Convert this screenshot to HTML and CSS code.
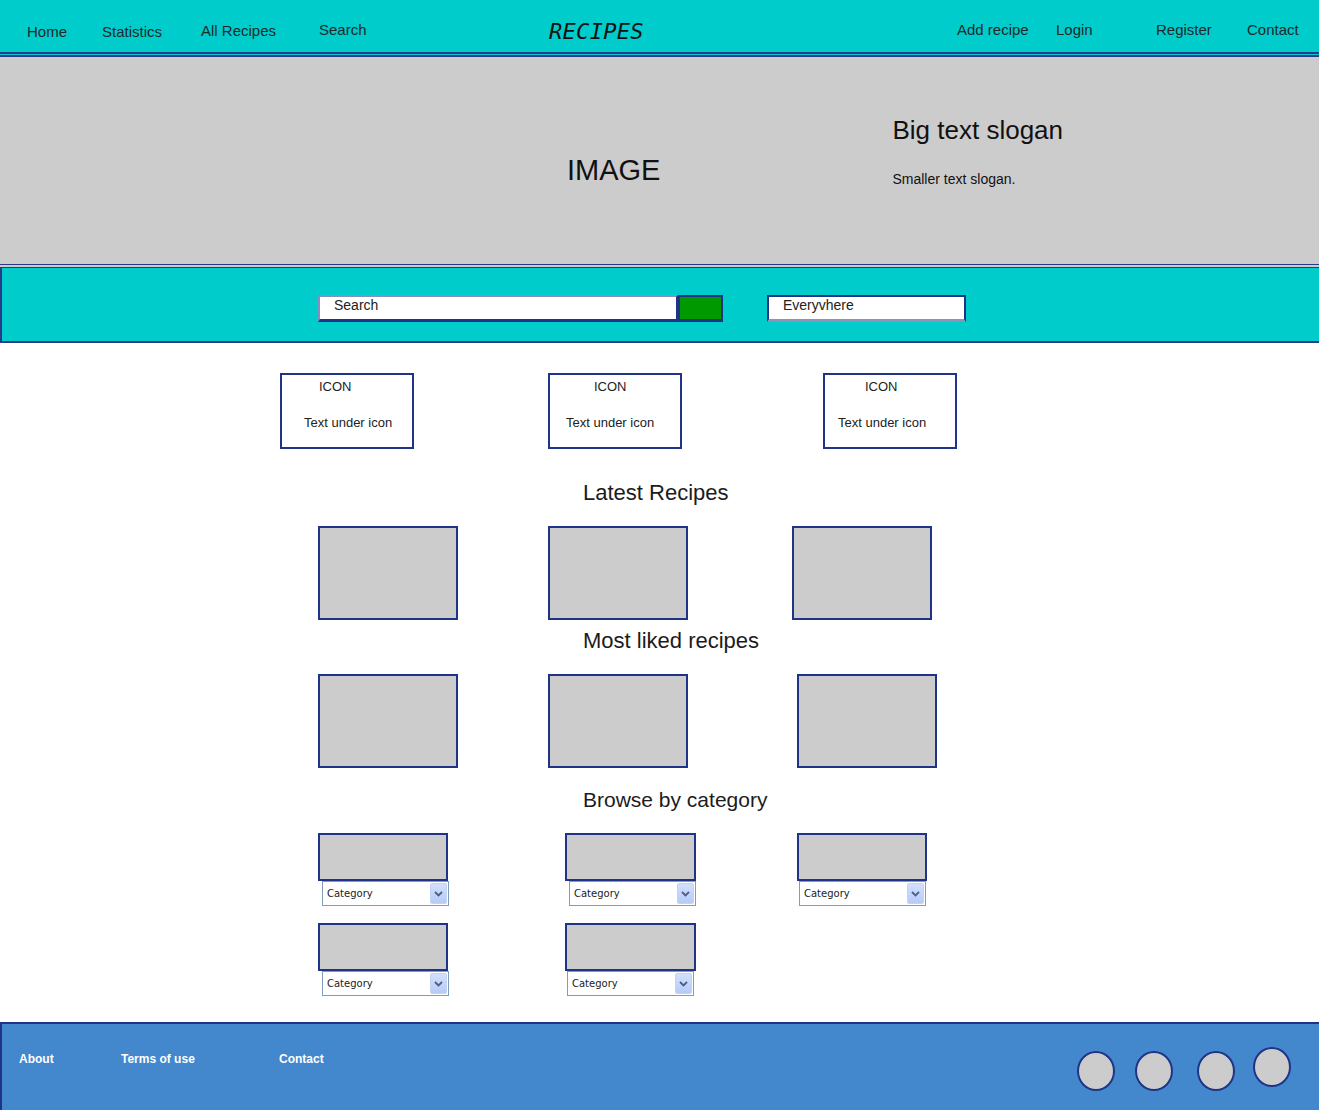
FILE: index.html
```html
<!DOCTYPE html>
<html lang="en">
<head>
<meta charset="utf-8">
<title>Recipes</title>
<link rel="stylesheet" href="styles.css">
</head>
<body>
<header class="topbar">
  <a class="nav-link nav-low">Home</a>
  <a class="nav-link nav-low">Statistics</a>
  <a class="nav-link nav-mid">All Recipes</a>
  <a class="nav-link">Search</a>
  <div class="logo">RECIPES</div>
  <a class="nav-link">Add recipe</a>
  <a class="nav-link">Login</a>
  <a class="nav-link">Register</a>
  <a class="nav-link">Contact</a>
</header>

<section class="hero">
  <div class="hero-image">IMAGE</div>
  <div class="slogan">
    <div class="slogan-big">Big text slogan</div>
    <div class="slogan-small">Smaller text slogan.</div>
  </div>
</section>

<section class="searchband">
  <div class="search-input">Search</div>
  <div class="search-btn"></div>
  <div class="scope-input">Everyvhere</div>
</section>

<main class="content">
  <div class="features">
    <div class="feature feature-1"><div class="feature-icon">ICON</div><div class="feature-text">Text under icon</div></div>
    <div class="feature feature-2"><div class="feature-icon">ICON</div><div class="feature-text">Text under icon</div></div>
    <div class="feature feature-3"><div class="feature-icon">ICON</div><div class="feature-text">Text under icon</div></div>
  </div>

  <h2 class="section-title title-latest">Latest Recipes</h2>
  <div class="cards">
    <div class="card"></div>
    <div class="card card-2"></div>
    <div class="card card-3a"></div>
  </div>

  <h2 class="section-title title-liked">Most liked recipes</h2>
  <div class="cards">
    <div class="card"></div>
    <div class="card card-2"></div>
    <div class="card card-3b"></div>
  </div>

  <h2 class="section-title title-browse">Browse by category</h2>
  <div class="cats">
    <div class="cat"><div class="cat-img"></div><div class="select">Category<span class="select-btn"><svg width="9" height="6" viewBox="0 0 9 6"><path d="M1 1 L4.5 4.5 L8 1" fill="none" stroke="#4d5f86" stroke-width="1.8"/></svg></span></div></div>
    <div class="cat cat-2"><div class="cat-img cat-img-wide"></div><div class="select">Category<span class="select-btn"><svg width="9" height="6" viewBox="0 0 9 6"><path d="M1 1 L4.5 4.5 L8 1" fill="none" stroke="#4d5f86" stroke-width="1.8"/></svg></span></div></div>
    <div class="cat cat-3"><div class="cat-img"></div><div class="select select-shift">Category<span class="select-btn"><svg width="9" height="6" viewBox="0 0 9 6"><path d="M1 1 L4.5 4.5 L8 1" fill="none" stroke="#4d5f86" stroke-width="1.8"/></svg></span></div></div>
  </div>
  <div class="cats cats-row2">
    <div class="cat"><div class="cat-img"></div><div class="select">Category<span class="select-btn"><svg width="9" height="6" viewBox="0 0 9 6"><path d="M1 1 L4.5 4.5 L8 1" fill="none" stroke="#4d5f86" stroke-width="1.8"/></svg></span></div></div>
    <div class="cat cat-2"><div class="cat-img cat-img-wide"></div><div class="select select-shift">Category<span class="select-btn"><svg width="9" height="6" viewBox="0 0 9 6"><path d="M1 1 L4.5 4.5 L8 1" fill="none" stroke="#4d5f86" stroke-width="1.8"/></svg></span></div></div>
  </div>
</main>

<footer class="footer">
  <nav class="footer-links">
    <a class="footer-link">About</a>
    <a class="footer-link">Terms of use</a>
    <a class="footer-link">Contact</a>
  </nav>
  <div class="socials">
    <span class="social"></span>
    <span class="social social-2"></span>
    <span class="social social-3"></span>
    <span class="social social-4"></span>
  </div>
</footer>
</body>
</html>
```

FILE: styles.css
```css
* { box-sizing: border-box; }

body {
  margin: 0;
  width: 1319px;
  background: #ffffff;
  font-family: "Liberation Sans", Arial, sans-serif;
  color: #1c1c1c;
}

/* ---------- top bar ---------- */
.topbar {
  display: grid;
  grid-template-columns: 75px 99px 118px 230px 408px 99px 100px 91px auto;
  align-items: start;
  height: 57px;
  padding-left: 27px;
  background: #00cccc;
  border-bottom: 5px double #2a3a8a;
}

.nav-link {
  font-size: 15px;
  line-height: 18px;
  color: #1e2a2a;
  margin-top: 21px;
  white-space: nowrap;
}
.nav-low { margin-top: 23px; }
.nav-mid { margin-top: 22px; }

.logo {
  margin-top: 19px;
  font-family: "DejaVu Sans Mono", monospace;
  font-style: italic;
  font-size: 22px;
  line-height: 26px;
  letter-spacing: 0.3px;
  color: #111;
}

/* ---------- hero ---------- */
.hero {
  display: flex;
  height: 211px;
  background: #cccccc;
  border-bottom: 4px double #2a3a8a;
}

.hero-image {
  margin: 96px 0 0 567px;
  font-size: 29px;
  line-height: 34px;
  color: #111;
}

.slogan {
  margin: 58px 0 0 232px;
}
.slogan-big {
  font-size: 26px;
  line-height: 30px;
  color: #111;
}
.slogan-small {
  margin-top: 26px;
  font-size: 14px;
  line-height: 16px;
  color: #111;
}

/* ---------- search band ---------- */
.searchband {
  display: flex;
  align-items: flex-start;
  height: 75px;
  padding: 27px 0 0 316px;
  background: #00cccc;
  border-left: 2px solid #2a3a8a;
  border-bottom: 2px solid #2a3a8a;
}

.search-input {
  width: 360px;
  height: 27px;
  padding-left: 14px;
  background: #ffffff;
  border: 2px solid #1f3486;
  border-top-color: #8490c0;
  border-left-color: #8490c0;
  border-bottom-width: 3px;
  font-size: 14px;
  line-height: 16px;
  color: #222;
}

.search-btn {
  width: 45px;
  height: 27px;
  background: #009900;
  border: 2px solid #1f3486;
  border-bottom-width: 3px;
}

.scope-input {
  width: 199px;
  height: 27px;
  margin-left: 44px;
  padding-left: 14px;
  background: #ffffff;
  border: 2px solid #1f3486;
  border-bottom: 3px solid #8c93b8;
  font-size: 14px;
  line-height: 16px;
  color: #222;
}

/* ---------- content ---------- */
.content {
  display: flex;
  flex-direction: column;
}

.features {
  display: flex;
  margin-top: 30px;
  padding-left: 280px;
}

.feature {
  width: 134px;
  height: 76px;
  border: 2px solid #1f3486;
  font-size: 13px;
  line-height: 16px;
  color: #222;
}
.feature-2 { margin-left: 134px; }
.feature-3 { margin-left: 141px; }

.feature-icon { margin-top: 4px; }
.feature-text { margin-top: 20px; }

.feature-1 .feature-icon { padding-left: 37px; }
.feature-1 .feature-text { padding-left: 22px; }
.feature-2 .feature-icon { padding-left: 44px; }
.feature-2 .feature-text { padding-left: 16px; }
.feature-3 .feature-icon { padding-left: 40px; }
.feature-3 .feature-text { padding-left: 13px; }

.section-title {
  margin: 0 0 0 583px;
  font-size: 22px;
  line-height: 26px;
  font-weight: normal;
  color: #1c1c1c;
}
.title-latest { margin-top: 31px; }
.title-liked { margin-top: 8px; }
.title-browse { margin-top: 19px; font-size: 21px; }

.cards {
  display: flex;
  margin-top: 20px;
  padding-left: 318px;
}

.card {
  width: 140px;
  height: 94px;
  background: #cccccc;
  border: 2px solid #1f3486;
}
.card-2 { margin-left: 90px; }
.card-3a { margin-left: 104px; }
.card-3b { margin-left: 109px; }

.cats {
  display: flex;
  margin-top: 20px;
  padding-left: 318px;
}
.cats-row2 { margin-top: 17px; }

.cat { width: 131px; }
.cat-2 { margin-left: 116px; }
.cat-3 { margin-left: 101px; }

.cat-img {
  width: 130px;
  height: 48px;
  background: #cccccc;
  border: 2px solid #1f3486;
}
.cat-img-wide { width: 131px; }

.select {
  position: relative;
  width: 127px;
  height: 25px;
  margin-left: 4px;
  padding-left: 4px;
  background: #ffffff;
  border: 1px solid #7f9db9;
  font-family: "DejaVu Sans", sans-serif;
  font-size: 10px;
  line-height: 23px;
  color: #222;
}
.select-shift { margin-left: 2px; }

.select-btn {
  position: absolute;
  right: 1px;
  top: 1px;
  width: 17px;
  height: 21px;
  display: flex;
  align-items: center;
  justify-content: center;
  background: linear-gradient(#d3e0fd, #b6cbf7);
  border: 1px solid #c3d3f6;
  border-radius: 2px;
}

/* ---------- footer ---------- */
.footer {
  display: flex;
  align-items: flex-start;
  height: 88px;
  margin-top: 26px;
  padding: 0 28px 0 17px;
  background: #4387cc;
  border-top: 2px solid #1f3486;
  border-left: 2px solid #1f3486;
}

.footer-links {
  display: grid;
  grid-template-columns: 102px 158px auto;
  margin-top: 28px;
}

.footer-link {
  font-size: 12px;
  line-height: 14px;
  font-weight: bold;
  color: #ffffff;
}

.socials {
  display: flex;
  align-items: flex-start;
  margin-left: auto;
}

.social {
  display: block;
  width: 38px;
  height: 40px;
  margin-top: 27px;
  border-radius: 50%;
  background: #cccccc;
  border: 2px solid #1f3486;
}
.social-2 { margin-left: 20px; }
.social-3 { margin-left: 24px; }
.social-4 { margin-left: 18px; margin-top: 23px; }
```
